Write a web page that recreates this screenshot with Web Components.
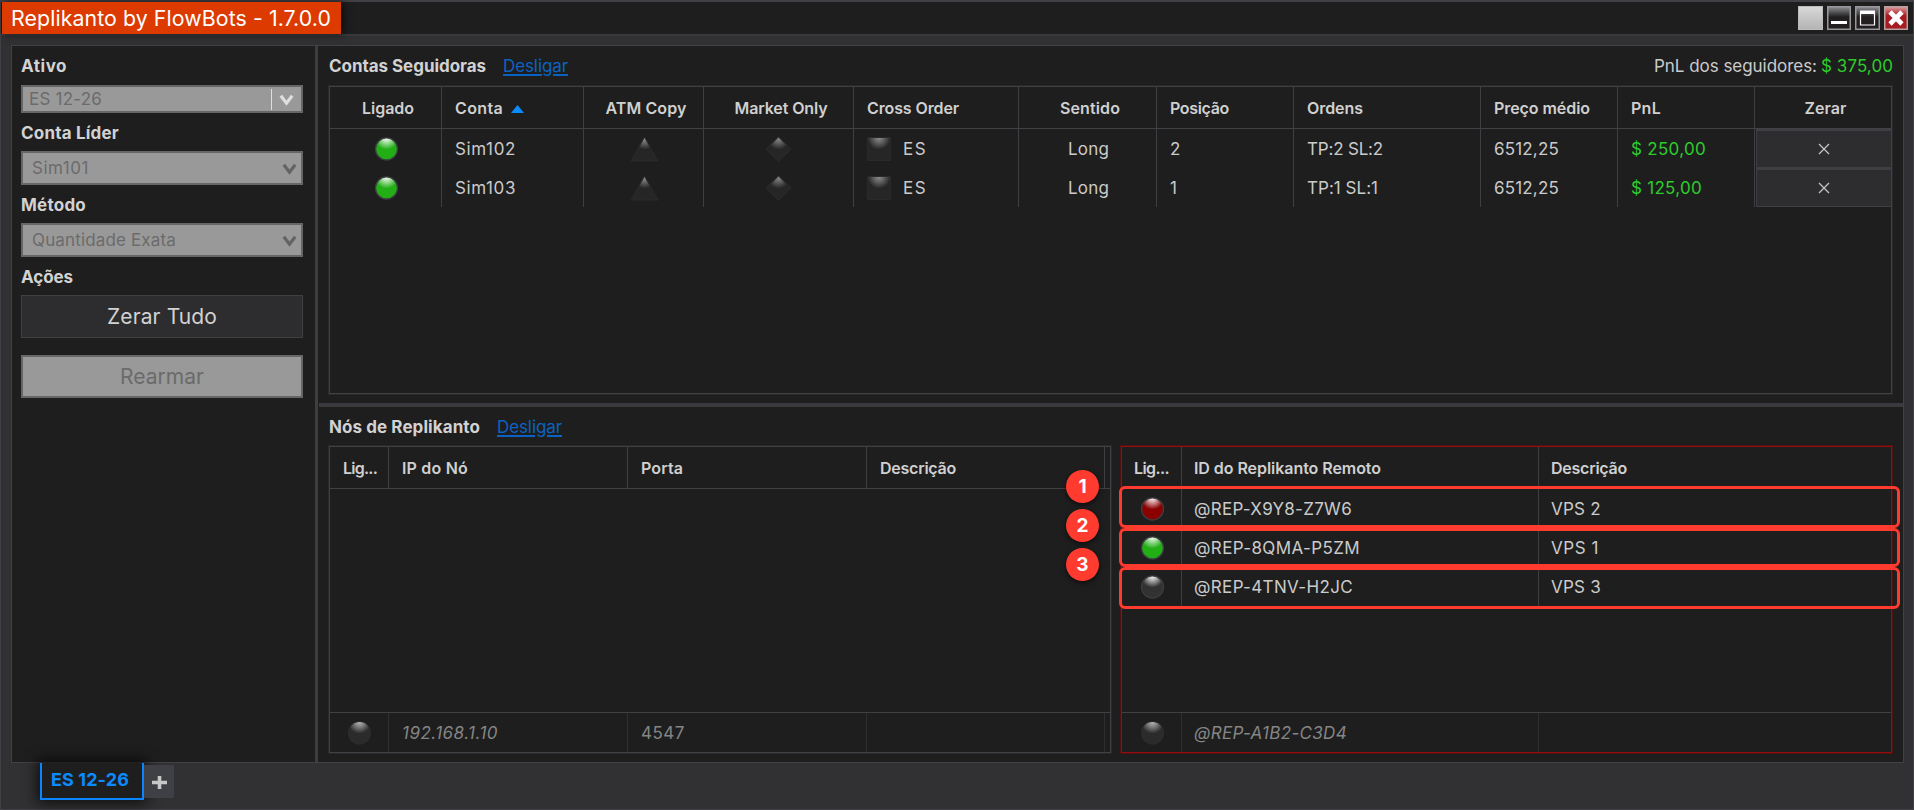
<!DOCTYPE html>
<html lang="pt-BR">
<head>
<meta charset="utf-8">
<title>Replikanto</title>
<style>
html,body{margin:0;height:100%;overflow:hidden;background:#313133}
body{font-family:Inter,"Open Sans",sans-serif;font-size:17px;color:#cbcbcb}
[slot=title]{font-size:21.3px;color:#fff}
a{color:#0a63c4;text-decoration:underline;text-decoration-thickness:2px;text-underline-offset:2px}
.b{font-weight:700;color:#d2d2d2}
.gr{color:#2ccc2c}
</style>
</head>
<body>
<app-window>
  <fit-text slot="title" w="320">Replikanto by FlowBots - 1.7.0.0</fit-text>
  <side-panel slot="side"></side-panel>
  <section-head slot="top" style="height:40px">
    <fit-text class="b" w="157">Contas Seguidoras</fit-text>
    <a style="margin-left:17px"><fit-text w="65">Desligar</fit-text></a>
    <fit-text slot="end" w="163">PnL dos seguidores:</fit-text>
    <fit-text slot="end" class="gr" w="72" style="margin-left:4px">$ 375,00</fit-text>
  </section-head>
  <data-grid slot="top" style="--pad:13px;--cols:112px 142px 120px 150px 165px 138px 137px 187px 137px 137px 1fr;height:308px">
    <grid-row head>
      <grid-cell center><fit-text w="52">Ligado</fit-text></grid-cell>
      <grid-cell><fit-text w="48">Conta</fit-text><sort-mark></sort-mark></grid-cell>
      <grid-cell center><fit-text w="81">ATM Copy</fit-text></grid-cell>
      <grid-cell center><fit-text w="93">Market Only</fit-text></grid-cell>
      <grid-cell><fit-text w="92">Cross Order</fit-text></grid-cell>
      <grid-cell center><fit-text w="60">Sentido</fit-text></grid-cell>
      <grid-cell><fit-text w="59">Posição</fit-text></grid-cell>
      <grid-cell><fit-text w="56">Ordens</fit-text></grid-cell>
      <grid-cell><fit-text w="96">Preço médio</fit-text></grid-cell>
      <grid-cell><fit-text w="30">PnL</fit-text></grid-cell>
      <grid-cell center last><fit-text w="42">Zerar</fit-text></grid-cell>
    </grid-row>
    <grid-row>
      <grid-cell center><led-mark kind="green"></led-mark></grid-cell>
      <grid-cell><fit-text w="61">Sim102</fit-text></grid-cell>
      <grid-cell center><led-mark kind="tri"></led-mark></grid-cell>
      <grid-cell center><led-mark kind="dia"></led-mark></grid-cell>
      <grid-cell><led-mark kind="sq"></led-mark><fit-text w="24" style="margin-left:12px">ES</fit-text></grid-cell>
      <grid-cell center><fit-text w="41">Long</fit-text></grid-cell>
      <grid-cell><fit-text>2</fit-text></grid-cell>
      <grid-cell><fit-text w="76">TP:2 SL:2</fit-text></grid-cell>
      <grid-cell><fit-text w="65">6512,25</fit-text></grid-cell>
      <grid-cell class="gr"><fit-text w="75">$ 250,00</fit-text></grid-cell>
      <grid-cell button last></grid-cell>
    </grid-row>
    <grid-row>
      <grid-cell center><led-mark kind="green"></led-mark></grid-cell>
      <grid-cell><fit-text w="61">Sim103</fit-text></grid-cell>
      <grid-cell center><led-mark kind="tri"></led-mark></grid-cell>
      <grid-cell center><led-mark kind="dia"></led-mark></grid-cell>
      <grid-cell><led-mark kind="sq"></led-mark><fit-text w="24" style="margin-left:12px">ES</fit-text></grid-cell>
      <grid-cell center><fit-text w="41">Long</fit-text></grid-cell>
      <grid-cell><fit-text>1</fit-text></grid-cell>
      <grid-cell><fit-text w="71">TP:1 SL:1</fit-text></grid-cell>
      <grid-cell><fit-text w="65">6512,25</fit-text></grid-cell>
      <grid-cell class="gr"><fit-text w="71">$ 125,00</fit-text></grid-cell>
      <grid-cell button last></grid-cell>
    </grid-row>
  </data-grid>

  <section-head slot="bottom">
    <fit-text class="b" w="151">Nós de Replikanto</fit-text>
    <a style="margin-left:17px"><fit-text w="65">Desligar</fit-text></a>
  </section-head>
  <data-grid slot="nodes" style="--pad:13px;--cols:59px 239px 239px 238px 1fr">
    <grid-row head>
      <grid-cell><fit-text w="34">Lig...</fit-text></grid-cell>
      <grid-cell><fit-text w="66">IP do Nó</fit-text></grid-cell>
      <grid-cell><fit-text w="42">Porta</fit-text></grid-cell>
      <grid-cell><fit-text w="76">Descrição</fit-text></grid-cell>
      <grid-cell last></grid-cell>
    </grid-row>
    <grid-row slot="foot" foot>
      <grid-cell center><led-mark kind="dim"></led-mark></grid-cell>
      <grid-cell><fit-text w="96" style="font-style:italic">192.168.1.10</fit-text></grid-cell>
      <grid-cell><fit-text w="44">4547</fit-text></grid-cell>
      <grid-cell></grid-cell>
      <grid-cell last></grid-cell>
    </grid-row>
  </data-grid>
  <data-grid slot="nodes" remote style="--cols:60px 357px 1fr;--frame:#970c0c;--frame2:#4f1212">
    <grid-row head>
      <grid-cell><fit-text w="35">Lig...</fit-text></grid-cell>
      <grid-cell><fit-text w="187">ID do Replikanto Remoto</fit-text></grid-cell>
      <grid-cell last><fit-text w="76">Descrição</fit-text></grid-cell>
    </grid-row>
    <grid-row>
      <grid-cell center><led-mark kind="red"></led-mark></grid-cell>
      <grid-cell><fit-text w="158">@REP-X9Y8-Z7W6</fit-text></grid-cell>
      <grid-cell last><fit-text w="50">VPS 2</fit-text></grid-cell>
      <call-out slot="mark" style="--t:-3px;--h:42px">1</call-out>
    </grid-row>
    <grid-row>
      <grid-cell center><led-mark kind="green"></led-mark></grid-cell>
      <grid-cell><fit-text w="166">@REP-8QMA-P5ZM</fit-text></grid-cell>
      <grid-cell last><fit-text w="48">VPS 1</fit-text></grid-cell>
      <call-out slot="mark" style="--t:0px;--h:39px;--bt:-22.5px">2</call-out>
    </grid-row>
    <grid-row>
      <grid-cell center><led-mark kind="gray"></led-mark></grid-cell>
      <grid-cell><fit-text w="159">@REP-4TNV-H2JC</fit-text></grid-cell>
      <grid-cell last><fit-text w="50">VPS 3</fit-text></grid-cell>
      <call-out slot="mark" style="--t:0px;--h:42px;--bt:-22.5px">3</call-out>
    </grid-row>
    <grid-row slot="foot" foot>
      <grid-cell center><led-mark kind="dim"></led-mark></grid-cell>
      <grid-cell><fit-text w="153" style="font-style:italic">@REP-A1B2-C3D4</fit-text></grid-cell>
      <grid-cell last></grid-cell>
    </grid-row>
  </data-grid>
</app-window>

<script>
const define = (name, html, init) => customElements.define(name, class extends HTMLElement {
  constructor() {
    super();
    this.attachShadow({ mode: 'open' }).innerHTML = typeof html === 'function' ? html(this) : html;
  }
  connectedCallback() { if (init) init(this); }
});

define('app-window', `<style>
:host{display:flex;flex-direction:column;box-sizing:border-box;width:1914px;height:810px;background:#313133;border:1px solid #404045;border-top-width:2px}
header{display:flex;height:32px;background:#1e1e1e;border-bottom:2px solid #39393c;justify-content:space-between;padding-left:1px}
.t{display:flex;align-items:center;box-sizing:border-box;width:339px;padding-left:9px;background:#dd3a00;box-shadow:2px 0 8px #000a}
main{display:flex;height:716px;margin:9px 9px 0 10px;border:1px solid #404045;background:#1e1e1e}
.side{width:303px;flex:none;border-right:3px solid #3e3e42}
.main{flex:1;display:flex;flex-direction:column;min-width:0;padding-left:1px}
.top{height:357px;padding:0 11px 0 10px;border-bottom:4px solid #3a3a3e}
.bot{flex:1;padding:0 10px 0 10px}
.nodes{display:grid;grid-template-columns:782px 771px;gap:10px;height:307px}
</style>
<header><div class="t"><slot name="title"></slot></div><window-buttons></window-buttons></header>
<main><div class="side"><slot name="side"></slot></div>
<div class="main"><div class="top"><slot name="top"></slot></div><div class="bot"><slot name="bottom"></slot><div class="nodes"><slot name="nodes"></slot></div></div></div></main>
<tab-strip></tab-strip>`);

define('window-buttons', `<style>
:host{display:flex;gap:4px;padding:4px 5px 0 0}
svg{display:block}
</style>
<svg width="25" height="24"><defs><linearGradient id="g" x2="0" y2="1"><stop stop-color="#d8d8d8"/><stop offset="1" stop-color="#b4b4b4"/></linearGradient></defs><rect width="25" height="24" fill="#bdbdbd"/><rect x="1" y="1" width="23" height="22" fill="url(#g)"/></svg>
<svg width="24" height="24"><defs><linearGradient id="k" x2="0" y2="1"><stop stop-color="#8d8d92"/><stop offset=".45" stop-color="#231f20"/></linearGradient></defs><rect x=".75" y=".75" width="22.5" height="22.5" fill="url(#k)" stroke="#98989c" stroke-width="1.5"/><rect x="4" y="15" width="16" height="3" fill="#fff"/></svg>
<svg width="25" height="24"><rect x=".75" y=".75" width="23.5" height="22.5" fill="url(#k2)" stroke="#98989c" stroke-width="1.5"/><defs><linearGradient id="k2" x2="0" y2="1"><stop stop-color="#8d8d92"/><stop offset=".45" stop-color="#231f20"/></linearGradient></defs><path d="M5.5 6.5h14v12.5h-14z" fill="none" stroke="#fff" stroke-width="1.2"/><rect x="5" y="4.5" width="15" height="3.5" fill="#fff"/></svg>
<svg width="24" height="24"><defs><linearGradient id="r" x2="0" y2="1"><stop stop-color="#dd9a9e"/><stop offset=".4" stop-color="#a61c22"/></linearGradient></defs><rect x=".75" y=".75" width="22.5" height="22.5" fill="url(#r)" stroke="#b9a0a3" stroke-width="1.5"/><path d="M6 6l12 12M18 6L6 18" stroke="#fff" stroke-width="4.6"/></svg>`);

define('side-panel', `<style>
:host{display:flex;flex-direction:column;padding:0 12px 0 9px}
.l{display:flex;align-items:center;box-sizing:border-box;padding-top:1px;font-weight:700;color:#d2d2d2;height:39px}
.l.x{height:38px}
</style>
<div class="l"><fit-text w="46">Ativo</fit-text></div>
<combo-box split><fit-text w="73">ES 12-26</fit-text></combo-box>
<div class="l x"><fit-text w="98">Conta Líder</fit-text></div>
<combo-box><fit-text w="57">Sim101</fit-text></combo-box>
<div class="l x"><fit-text w="65">Método</fit-text></div>
<combo-box><fit-text w="144">Quantidade Exata</fit-text></combo-box>
<div class="l x"><fit-text w="52">Ações</fit-text></div>
<push-button><fit-text w="110">Zerar Tudo</fit-text></push-button>
<push-button off style="margin-top:17px"><fit-text w="84">Rearmar</fit-text></push-button>`);

define('combo-box', `<style>
:host{display:flex;align-items:center;box-sizing:border-box;height:34px;border:2px solid #666;background:#999;color:#6b6b6b;padding:0 4px 0 9px;justify-content:space-between;--c:#636363}
:host([split]){height:28px;padding:0 7px 0 6px;--c:#dedede}
.d{display:none;width:1px;height:21px;background:#dedede;margin-left:auto;margin-right:7px}
:host([split]) .d{display:block}
svg{display:block;margin-top:2px}
</style><slot></slot><i class="d"></i><svg width="15" height="12"><path d="M1.8 1.8L7.5 9.2L13.2 1.8" fill="none" stroke="var(--c)" stroke-width="3.2"/></svg>`);

define('push-button', `<style>
:host{display:flex;align-items:center;justify-content:center;box-sizing:border-box;height:43px;border:1px solid #404044;background:#2d2d30;font-size:21px;color:#d2d2d2}
:host([off]){background:#999;border:2px solid #666;color:#6b6b6b}
</style><slot></slot>`);

define('section-head', `<style>
:host{display:flex;align-items:center;height:39px}
.e{margin-left:auto;display:flex;margin-right:-1px}
</style><slot></slot><div class="e"><slot name="end"></slot></div>`);

define('data-grid', `<style>
:host{display:flex;flex-direction:column;box-sizing:border-box;border:1px solid var(--frame,#404045);box-shadow:0 0 0 1px var(--frame2,#29292b);position:relative}
.f{margin-top:auto}
</style><slot></slot><div class="f"><slot name="foot"></slot></div>`);

define('grid-row', `<style>
:host{display:grid;grid-template-columns:var(--cols);height:39px;position:relative}
:host([head]){height:41px;border-bottom:1px solid #404045;font-size:16px;font-weight:600;color:#d0d0d0;--cpad:5px}
:host([foot]){height:39px;border-top:1px solid #404045;color:#858585;--sep:#2f2f32}
</style><slot></slot><slot name="mark"></slot>`);

define('grid-cell', el => `<style>
:host{display:flex;align-items:center;box-sizing:border-box;padding-left:var(--pad,12px);border-right:1px solid var(--sep,#3f3f43);white-space:nowrap;overflow:hidden}
:host([center]){justify-content:center;padding-left:var(--cpad,2px)}
:host([last]){border-right:0}
:host([button]){justify-content:center;padding:0;background:#2d2d30;border:1px solid #3f3f43;border-width:2px 0 1px 1px;margin-left:1px}
</style>` + (el.hasAttribute('button') ? '<svg width="12" height="12"><path d="M1 1l10 10M11 1L1 11" stroke="#c4c4c4" stroke-width="1.3"/></svg>' : '<slot></slot>'));

define('sort-mark', `<style>:host{display:block;margin-left:8px;margin-top:2px}svg{display:block}</style><svg width="13" height="8"><path d="M0 8L6.5 0L13 8z" fill="#0a8cff"/></svg>`);

const shapes = {
  green: '<circle cx="14.5" cy="13" r="11" fill="#22af16" stroke="#3d3d43" stroke-width="1.3"/><circle cx="14.5" cy="13" r="10.4" fill="url(#s)"/>',
  red: '<circle cx="14.5" cy="13" r="11" fill="#8b0000" stroke="#3d3d43" stroke-width="1.3"/><circle cx="14.5" cy="13" r="10.4" fill="url(#s)"/>',
  gray: '<circle cx="14.5" cy="13" r="11" fill="#323232" stroke="#3d3d40" stroke-width="1.3"/><circle cx="14.5" cy="13" r="10.4" fill="url(#s)"/>',
  dim: '<circle cx="14.5" cy="13" r="11.7" fill="#2b2b2b"/><circle cx="14.5" cy="13" r="11" fill="url(#s)" opacity=".68"/>',
  tri: '<path d="M14.5 1L28 25H1z" fill="#262626" stroke="#2a2a2a"/><path d="M14.5 2L27 24H2z" fill="url(#s)" opacity=".52"/>',
  dia: '<path d="M14.5 .5L27 13L14.5 25.5L2 13z" fill="#262626" stroke="#2a2a2a"/><path d="M14.5 1.5L26 13L14.5 24.5L3 13z" fill="url(#s)" opacity=".48"/>',
  sq: '<path d="M.5 1.5h23v23H.5z" fill="#262626" stroke="#2a2a2a"/><path d="M1 2h22v22H1z" fill="url(#s)" opacity=".48"/>'
};
define('led-mark', el => {
  const k = el.getAttribute('kind'), sq = k === 'sq', w = sq ? 24 : 29;
  return `<style>:host{display:block;margin-left:${sq ? 0 : k === 'dia' ? -3 : -1}px}svg{display:block}</style><svg width="${w}" height="26"><defs><radialGradient id="s" gradientUnits="userSpaceOnUse" cx="${sq ? 12 : 14.5}" cy="2" r="11.5"><stop stop-color="#fff" stop-opacity=".97"/><stop offset=".35" stop-color="#fff" stop-opacity=".66"/><stop offset="1" stop-color="#fff" stop-opacity="0"/></radialGradient></defs>${shapes[k]}</svg>`;
});

define('call-out', `<style>
:host{position:absolute;left:-3px;top:var(--t);width:781px;height:var(--h);box-sizing:border-box;border:3px solid #ff3b2f;border-radius:6px;z-index:2}
b{position:absolute;left:-56px;top:var(--bt,-19.5px);width:33px;height:33px;border-radius:50%;background:#ff3b2f;color:#fff;display:flex;align-items:center;justify-content:center;font-size:19px;box-shadow:0 2px 5px #0009}
</style><b><slot></slot></b>`);

define('tab-strip', `<style>
:host{display:flex;align-items:flex-start;padding-left:39px;margin-top:0}
.t{display:flex;align-items:center;box-sizing:border-box;width:104px;height:37px;padding:0 0 2px 9px;border:2px solid #0a84ff;border-top:0;background:#1e1e1e;color:#0a8cff;font-weight:700;font-size:18px;box-shadow:0 0 14px 3px #000b}
.p{width:30px;height:33px;margin-top:2px;background:#3f3f46;display:flex;align-items:center;justify-content:center}
.p svg{margin-top:2px}
</style><div class="t"><fit-text w="78">ES 12-26</fit-text></div><div class="p"><svg width="15" height="15"><path d="M7.5 1v13M0 7.5h15" stroke="#c8c8c8" stroke-width="3.6"/></svg></div>`);

/* A single line of text whose letter-spacing is tuned to a requested width. */
define('fit-text', `<style>:host{display:inline-block;white-space:nowrap;text-decoration:inherit}</style><slot></slot>`, el => {
  const w = +el.getAttribute('w');
  if (!w) return;
  el.style.letterSpacing = '0px';
  const d = w - el.getBoundingClientRect().width;
  el.style.letterSpacing = (d / el.textContent.length).toFixed(3) + 'px';
});
</script>
</body>
</html>
